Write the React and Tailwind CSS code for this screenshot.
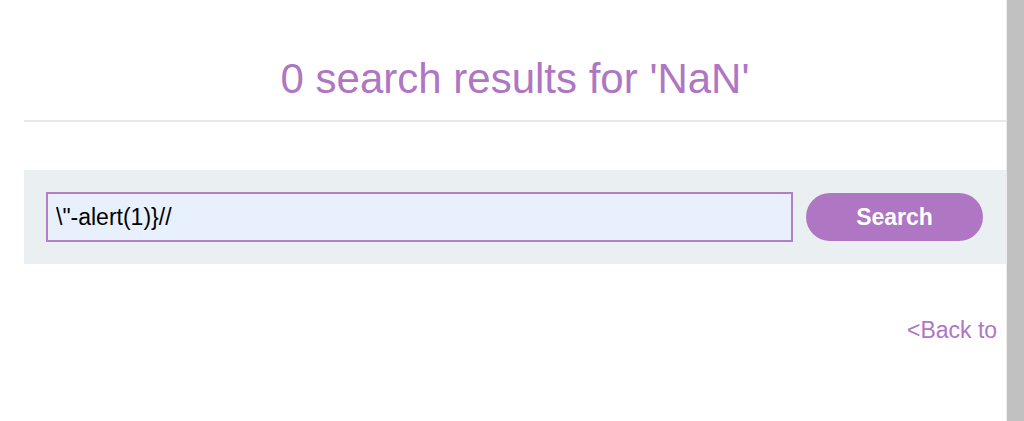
import React from 'react';

const purple = 'text-[#ae76c3]';

export default function App() {
  return (
    <div className="flex h-[421px] w-[1024px] overflow-hidden bg-white font-['Liberation_Sans',Arial,sans-serif]">
      <main className="min-w-0 flex-1 overflow-hidden pl-6">
        <div className="w-[982px]">
          <h1 className={`pt-[53px] pb-[15px] text-center text-[42px] leading-[52px] font-normal ${purple}`}>
            0 search results for 'NaN'
          </h1>
          <div className="h-[2px] bg-[#e8e8e8]" />
          <section className="mt-[48px] flex h-[94px] items-center gap-[13px] bg-[#eaeff2] px-[22px]">
            <input
              readOnly
              value={'\\"-alert(1)}//'}
              className="h-[50px] w-[747px] border-2 border-[#b27ec6] bg-[#e8f0fe] px-[8px] text-[23px] text-black outline-none"
            />
            <button className="h-[48px] w-[177px] rounded-full bg-[#ae76c3] text-[23px] font-bold text-white">
              Search
            </button>
          </section>
          <div className="mt-[53px] whitespace-nowrap pl-[883px]">
            <a className={`text-[23px] leading-[26px] ${purple}`}>&lt;Back to</a>
          </div>
        </div>
      </main>
      <div className="h-full w-[18px] border-l border-[#ececec] bg-[#c1c1c1]" />
    </div>
  );
}
